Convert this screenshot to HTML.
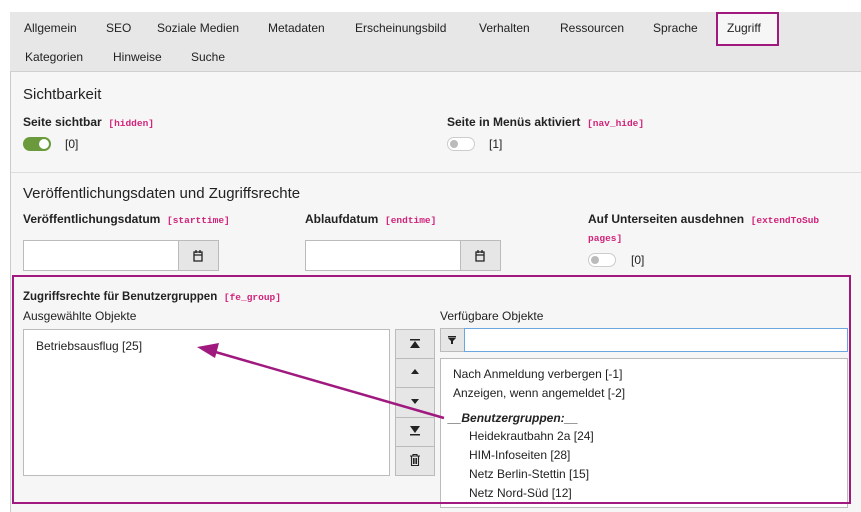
<!DOCTYPE html>
<html><head><meta charset="utf-8"><style>
*{box-sizing:border-box;margin:0;padding:0}
body{width:861px;height:512px;overflow:hidden;background:#fff;font-family:"Liberation Sans","DejaVu Sans",sans-serif;font-size:12px;color:#222;position:relative}
.a{position:absolute;white-space:nowrap}
.tabs{position:absolute;left:10px;top:12px;width:851px;height:60px;background:#e7e7e7;border-bottom:1px solid #d0d0d0}
.panel{position:absolute;left:10px;top:72px;width:851px;height:440px;background:#f6f6f6;border-left:1px solid #ccc}
.h{font-size:15px;color:#222}
.lbl{font-weight:bold;font-size:12px}
.code{font-family:"Liberation Mono",monospace;font-size:9.5px;color:#d1237a;font-weight:bold}
.tog{position:absolute;width:28px;height:14px;border-radius:7px}
.inp{position:absolute;background:#fff;border:1px solid #bbb}
.btn{position:absolute;background:#e6e6e6;border:1px solid #bbb}
svg.i{position:absolute}
</style></head><body>
<div class="tabs"></div>
<div class="a" style="left:24px;top:21px">Allgemein</div>
<div class="a" style="left:106px;top:21px">SEO</div>
<div class="a" style="left:157px;top:21px">Soziale Medien</div>
<div class="a" style="left:268px;top:21px">Metadaten</div>
<div class="a" style="left:355px;top:21px">Erscheinungsbild</div>
<div class="a" style="left:479px;top:21px">Verhalten</div>
<div class="a" style="left:560px;top:21px">Ressourcen</div>
<div class="a" style="left:653px;top:21px">Sprache</div>
<div class="a" style="left:716px;top:12px;width:63px;height:34px;background:#f6f6f6;border:2px solid #a0197f;padding:7px 0 0 9px">Zugriff</div>
<div class="a" style="left:25px;top:50px">Kategorien</div>
<div class="a" style="left:113px;top:50px">Hinweise</div>
<div class="a" style="left:191px;top:50px">Suche</div>
<div class="panel"></div>
<div class="a h" style="left:23px;top:86px">Sichtbarkeit</div>
<div class="a" style="left:23px;top:115px"><span class="lbl">Seite sichtbar</span> &nbsp;<span class="code">[hidden]</span></div>
<div class="tog" style="left:23px;top:137px;background:#6a9a3c"><div style="position:absolute;right:2px;top:2px;width:10px;height:10px;border-radius:5px;background:#fff"></div></div>
<div class="a" style="left:65px;top:137px">[0]</div>
<div class="a" style="left:447px;top:115px"><span class="lbl">Seite in Menüs aktiviert</span> &nbsp;<span class="code">[nav_hide]</span></div>
<div class="tog" style="left:447px;top:137px;background:#fff;border:1px solid #ccc"><div style="position:absolute;left:2px;top:2px;width:8px;height:8px;border-radius:4px;background:#bbb"></div></div>
<div class="a" style="left:489px;top:137px">[1]</div>
<div class="a" style="left:11px;top:172px;width:850px;height:1px;background:#ddd"></div>
<div class="a h" style="left:23px;top:185px">Veröffentlichungsdaten und Zugriffsrechte</div>
<div class="a" style="left:23px;top:212px"><span class="lbl">Veröffentlichungsdatum</span> &nbsp;<span class="code">[starttime]</span></div>
<div class="a" style="left:305px;top:212px"><span class="lbl">Ablaufdatum</span> &nbsp;<span class="code">[endtime]</span></div>
<div class="a" style="left:588px;top:212px"><span class="lbl">Auf Unterseiten ausdehnen</span> &nbsp;<span class="code">[extendToSub</span></div>
<div class="a code" style="left:588px;top:233px">pages]</div>
<div class="inp" style="left:23px;top:240px;width:196px;height:31px"></div>
<div class="btn" style="left:178px;top:240px;width:41px;height:31px"></div>
<svg class="i" style="left:192px;top:249px" width="12" height="13"><path d="M2 3h8v9H2z M2 6h8" fill="none" stroke="#222" stroke-width="1.3"/><path d="M4 1v3M8 1v3" stroke="#222" stroke-width="1.3"/></svg>
<div class="inp" style="left:305px;top:240px;width:196px;height:31px"></div>
<div class="btn" style="left:460px;top:240px;width:41px;height:31px"></div>
<svg class="i" style="left:474px;top:249px" width="12" height="13"><path d="M2 3h8v9H2z M2 6h8" fill="none" stroke="#222" stroke-width="1.3"/><path d="M4 1v3M8 1v3" stroke="#222" stroke-width="1.3"/></svg>
<div class="tog" style="left:588px;top:253px;background:#fff;border:1px solid #ccc"><div style="position:absolute;left:2px;top:2px;width:8px;height:8px;border-radius:4px;background:#bbb"></div></div>
<div class="a" style="left:631px;top:253px">[0]</div>
<div class="a" style="left:12px;top:275px;width:839px;height:229px;border:2px solid #a0197f"></div>
<div class="a" style="left:23px;top:289px"><span class="lbl" style="font-size:11.5px">Zugriffsrechte für Benutzergruppen</span> &nbsp;<span class="code">[fe_group]</span></div>
<div class="a" style="left:23px;top:309px">Ausgewählte Objekte</div>
<div class="a" style="left:440px;top:309px">Verfügbare Objekte</div>
<div class="inp" style="left:23px;top:329px;width:367px;height:147px"></div>
<div class="a" style="left:36px;top:339px">Betriebsausflug [25]</div>
<div class="btn" style="left:395px;top:329px;width:40px;height:147px"></div>
<div class="a" style="left:395px;top:358px;width:40px;height:1px;background:#bbb"></div>
<div class="a" style="left:395px;top:387px;width:40px;height:1px;background:#bbb"></div>
<div class="a" style="left:395px;top:417px;width:40px;height:1px;background:#bbb"></div>
<div class="a" style="left:395px;top:446px;width:40px;height:1px;background:#bbb"></div>
<svg class="i" style="left:395px;top:329px" width="40" height="147">
<g fill="#222">
<rect x="15" y="10" width="10" height="1.5"/><polygon points="20,12 25,19 15,19"/>
<polygon points="20,40 24,45 16,45"/>
<polygon points="16,70 24,70 20,75"/>
<polygon points="15,97 25,97 20,104"/><rect x="15" y="105" width="10" height="1.5"/>
</g>
<g fill="none" stroke="#222" stroke-width="1.1"><path d="M15 127h10M18 127v-1.5h4v1.5M16.5 127.5v9h7v-9M18.5 129v6M20 129v6M21.5 129v6"/></g>
</svg>
<div class="btn" style="left:440px;top:328px;width:25px;height:24px"></div>
<svg class="i" style="left:448px;top:336px" width="9" height="8"><rect x="0" y="0" width="8" height="1.5" fill="#222"/><polygon points="0,2 8,2 5,5 5,8 3,8 3,5" fill="#222"/></svg>
<div class="inp" style="left:464px;top:328px;width:384px;height:24px;border-color:#6aa6e0"></div>
<div class="inp" style="left:440px;top:358px;width:408px;height:150px"></div>
<div class="a" style="left:453px;top:367px">Nach Anmeldung verbergen [-1]</div>
<div class="a" style="left:453px;top:386px">Anzeigen, wenn angemeldet [-2]</div>
<div class="a" style="left:448px;top:411px;font-weight:bold;font-style:italic">__Benutzergruppen:__</div>
<div class="a" style="left:469px;top:429px">Heidekrautbahn 2a [24]</div>
<div class="a" style="left:469px;top:448px">HIM-Infoseiten [28]</div>
<div class="a" style="left:469px;top:467px">Netz Berlin-Stettin [15]</div>
<div class="a" style="left:469px;top:486px">Netz Nord-Süd [12]</div>
<div class="a" style="left:12px;top:502px;width:839px;height:2px;background:#a0197f"></div>
<svg class="a" style="left:0;top:0" width="861" height="512"><line x1="444" y1="418" x2="212" y2="351" stroke="#a0197f" stroke-width="2.5"/><polygon points="197,347 219,343 215,358" fill="#a0197f"/></svg>
</body></html>
